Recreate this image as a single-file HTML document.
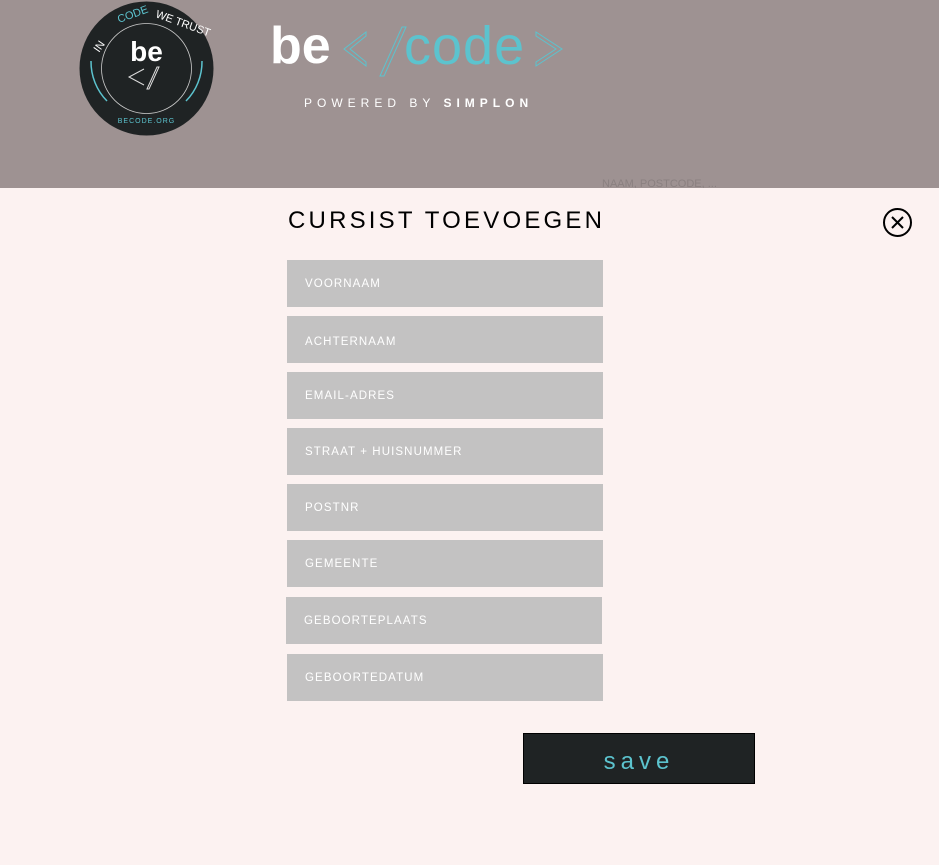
<!DOCTYPE html><html><head><style>
body{margin:0;width:939px;height:865px;overflow:hidden;background:#fcf2f1;font-family:"Liberation Sans",sans-serif;position:relative}
.top{position:absolute;left:0;top:0;width:939px;height:188px;background:#9e9292}
.f{position:absolute;left:287px;width:316px;height:47px;background:#c3c2c2;color:#fff;font-size:11.5px;letter-spacing:1.1px;box-sizing:border-box;padding-left:18px}
.f span{position:absolute;top:18px}
</style></head><body>
<div class="top"></div>
<svg style="position:absolute;left:79px;top:1px" width="135" height="135" viewBox="0 0 135 135">
<circle cx="67.5" cy="67.5" r="67" fill="#1f2324"/>
<circle cx="67.5" cy="67.5" r="45" fill="none" stroke="#ccc" stroke-width="0.8"/>
<path d="M12 60 A56 56 0 0 0 28 100" stroke="#5cc3ce" stroke-width="1.5" fill="none"/>
<path d="M123 60 A56 56 0 0 1 107 100" stroke="#5cc3ce" stroke-width="1.5" fill="none"/>
<text x="67.5" y="60" text-anchor="middle" fill="#fff" font-size="28" font-weight="bold" font-family="Liberation Sans">be</text>
<path d="M65 68 L50 76 L65 84 M68 88 L78 66 L80 66 L70 88Z" stroke="#ddd" stroke-width="1" fill="none"/>
<text x="20" y="52" fill="#fff" font-size="11" transform="rotate(-55 20 52)">IN</text>
<text x="40" y="22" fill="#5cc3ce" font-size="11" transform="rotate(-20 40 22)">CODE</text>
<text x="76" y="16" fill="#fff" font-size="11" transform="rotate(20 76 16)">WE TRUST</text>
<text x="67.5" y="122" text-anchor="middle" fill="#5cc3ce" font-size="7" letter-spacing="1">BECODE.ORG</text>
</svg>
<div style="position:absolute;left:270px;top:14px;font-size:52px;font-weight:bold;color:#fff;letter-spacing:0px;line-height:64px">be</div>
<svg style="position:absolute;left:340px;top:24px" width="230" height="54">
<path d="M26 8 L4 25 L26 42 L26 38 L10 25 L26 12Z" fill="none" stroke="#5cc3ce"/>
<path d="M62 3 L66 3 L44 52 L40 52Z" fill="none" stroke="#5cc3ce"/>
<path d="M196 8 L222 25 L196 42 L196 38 L216 25 L196 12Z" fill="none" stroke="#5cc3ce"/>
</svg>
<div style="position:absolute;left:404px;top:14px;font-size:54px;color:#5cc3ce;letter-spacing:1px;line-height:64px">code</div>
<div style="position:absolute;left:304px;top:96px;font-size:12px;color:#fff;letter-spacing:5px">POWERED BY <b>SIMPLON</b></div>
<div style="position:absolute;left:602px;top:178px;font-size:11px;color:#8a8080">NAAM, POSTCODE, ...</div>
<div style="position:absolute;left:0;top:188px;width:939px;height:677px;background:#fcf2f1"></div>
<div style="position:absolute;left:288px;top:207px;font-size:24px;letter-spacing:3.2px;color:#000">CURSIST TOEVOEGEN</div>
<svg style="position:absolute;left:882px;top:207px" width="31" height="31"><circle cx="15.5" cy="15.5" r="13.5" fill="none" stroke="#000" stroke-width="2"/><path d="M10 10 L21 21 M21 10 L10 21" stroke="#000" stroke-width="2"/></svg>
<div class="f" style="top:260px"><span>VOORNAAM</span></div>
<div class="f" style="top:316px"><span style="top:20px">ACHTERNAAM</span></div>
<div class="f" style="top:372px"><span>EMAIL-ADRES</span></div>
<div class="f" style="top:428px"><span>STRAAT + HUISNUMMER</span></div>
<div class="f" style="top:484px"><span>POSTNR</span></div>
<div class="f" style="top:540px"><span>GEMEENTE</span></div>
<div class="f" style="top:597px;left:286px"><span>GEBOORTEPLAATS</span></div>
<div class="f" style="top:654px"><span>GEBOORTEDATUM</span></div>
<div style="position:absolute;left:523px;top:733px;width:232px;height:51px;background:#1f2324;box-sizing:border-box;border:1px solid #000;color:#5cc3ce;font-size:24px;letter-spacing:5px;text-align:center;line-height:56px">save</div>
</body></html>
